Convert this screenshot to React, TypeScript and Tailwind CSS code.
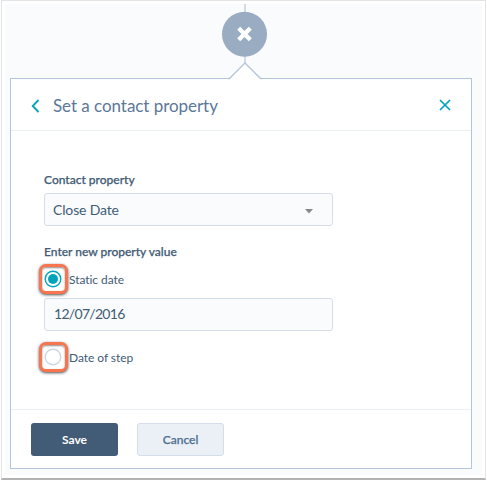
import React from "react";

function Radio({ checked, label }: { checked?: boolean; label: string }) {
  return (
    <label className="-ml-[5px] flex h-[30px] items-center">
      <span className="flex h-[30px] w-[29px] shrink-0 items-center justify-center rounded-[7px] border-[3px] border-[#f8764f] bg-white pr-[1px] shadow-[0_1px_3px_rgba(0,0,0,0.7),inset_0_1px_2px_rgba(0,0,0,0.45)]">
        <svg className="shrink-0" width="18" height="18" viewBox="0 0 18 18" fill="none">
          <circle cx="9" cy="9" r="7.8" stroke={checked ? "#00a4bd" : "#cbd6e2"} strokeWidth="1.4" />
          {checked && <circle cx="9" cy="9" r="5" fill="#00a4bd" />}
        </svg>
      </span>
      <span className="ml-[1px] mt-[2px] whitespace-nowrap text-[12px] leading-[16px] tracking-[-0.05px] text-[#425b76]">{label}</span>
    </label>
  );
}

export default function App() {
  return (
    <div className="h-[481px] w-[487px] overflow-hidden bg-white pl-px font-['Lato',sans-serif]">
      <div className="h-[480px] w-[485px] border border-b-2 border-[#e4e4e4] border-b-[#b2b2b2] bg-white px-[3px] pt-[3px]">
        <div className="flex h-[471px] w-[477px] flex-col bg-[#f9fbfd] px-[5px]">
          <div className="flex h-[74px] flex-col items-center">
            <svg className="ml-[3px] shrink-0 overflow-visible" width="50" height="76" viewBox="0 0 50 76" fill="none">
              <path d="M25 0V60" stroke="#c3d0e0" strokeWidth="1.5" />
              <circle cx="24.5" cy="30.2" r="22.5" fill="#99acc2" />
              <path d="M18.7 24.2L30.3 35.8M30.3 24.2L18.7 35.8" stroke="white" strokeWidth="4.3" />
            </svg>
          </div>
          <div className="relative h-[391px] w-[462px] border border-[#b5c5da] bg-white">
            <svg className="absolute -top-[17px] left-[217px]" width="34" height="18" viewBox="0 0 34 18" fill="none">
              <path d="M1 17L17 1L33 17V18H1Z" fill="white" />
              <path d="M0 16.5H1.5L17 1L32.5 16.5H34" stroke="#b5c5da" strokeWidth="1.3" />
            </svg>
            <header className="flex h-[52px] items-center border-b border-[#eaf0f6] pl-[20px] pr-[20px]">
              <svg className="mt-[2px]" width="9" height="14" viewBox="0 0 9 14" fill="none"><path d="M7.5 1L1.7 7L7.5 13" stroke="#00a4bd" strokeWidth="1.8" /></svg>
              <h1 className="ml-[13px] mt-[2px] flex-1 whitespace-nowrap text-[17px] font-normal leading-[22px] tracking-[-0.05px] text-[#5c7898]">Set a contact property</h1>
              <svg className="mt-[1px]" width="12" height="12" viewBox="0 0 12 12" fill="none"><path d="M1 1L11 11M11 1L1 11" stroke="#00a4bd" strokeWidth="1.7" /></svg>
            </header>
            <main className="flex h-[279px] flex-col border-b border-[#eaf0f6] px-[33px] pt-[40px] text-[#425b76]">
              <div className="h-[22px] whitespace-nowrap text-[12px] font-medium leading-[18px] [-webkit-text-stroke:0.25px_#425b76]">Contact property</div>
              <div className="flex h-[33px] w-[289px] shrink-0 items-center justify-between rounded-[3px] border border-[#d3deea] bg-[#f9fbfd] pl-[8px] pr-[19px] text-[14px] tracking-[-0.15px]">
                <span>Close Date</span>
                <svg width="8" height="5" viewBox="0 0 8 5" className="mt-[4px]"><path d="M0 0H8L4 4.5Z" fill="#888" /></svg>
              </div>
              <div className="mt-[17px] h-[22px] whitespace-nowrap text-[12px] font-medium leading-[18px] [-webkit-text-stroke:0.25px_#425b76]">Enter new property value</div>
              <div className="-mt-[1px]"><Radio checked label="Static date" /></div>
              <div className="mt-[4px] flex h-[33px] w-[289px] shrink-0 items-center rounded-[3px] border border-[#d3deea] bg-[#f9fbfd] pl-[9px] pb-[2px] text-[14px] tracking-[-0.7px]">12/07/2016</div>
              <div className="mt-[11px]"><Radio label="Date of step" /></div>
            </main>
            <footer className="flex gap-[19px] pl-[20px] pt-[13px]">
              <button className="h-[33px] w-[87px] rounded-[3px] bg-[#425b76] text-[12px] font-bold text-white">Save</button>
              <button className="h-[33px] w-[87px] rounded-[3px] border border-[#d3deea] bg-[#eaf0f6] text-[12px] font-medium text-[#506e91] [-webkit-text-stroke:0.25px_#506e91]">Cancel</button>
            </footer>
          </div>
        </div>
      </div>
    </div>
  );
}
